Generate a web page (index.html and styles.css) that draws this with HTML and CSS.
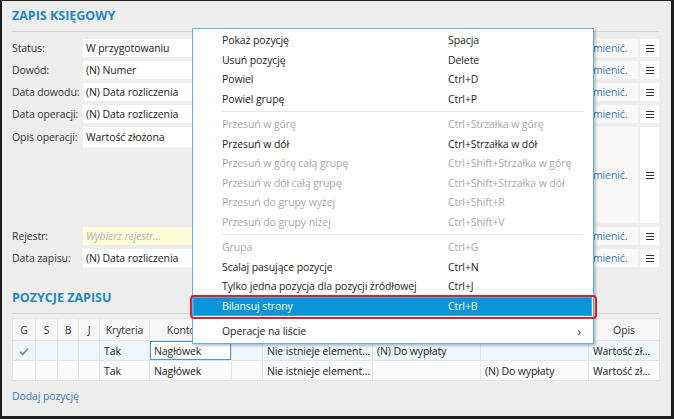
FILE: index.html
```html
<!DOCTYPE html>
<html lang="pl">
<head>
<meta charset="utf-8">
<title>Zapis księgowy</title>
<link rel="stylesheet" href="styles.css">
</head>
<body>
<div class="frame">
  <section class="section">
    <h2 class="section-title">ZAPIS KSIĘGOWY</h2>
    <div class="form">
      <div class="form-row">
        <span class="label">Status:</span>
        <div class="field">W przygotowaniu</div>
        <a class="change">Zmienić.</a>
        <span class="menu-btn"><svg width="8" height="7" viewBox="0 0 8 7"><path d="M0 0.5H8M0 3.5H8M0 6.5H8" stroke="#333" stroke-width="1"/></svg></span>
      </div>
      <div class="form-row">
        <span class="label">Dowód:</span>
        <div class="field">(N) Numer</div>
        <a class="change">Zmienić.</a>
        <span class="menu-btn"><svg width="8" height="7" viewBox="0 0 8 7"><path d="M0 0.5H8M0 3.5H8M0 6.5H8" stroke="#333" stroke-width="1"/></svg></span>
      </div>
      <div class="form-row">
        <span class="label">Data dowodu:</span>
        <div class="field">(N) Data rozliczenia</div>
        <a class="change">Zmienić.</a>
        <span class="menu-btn"><svg width="8" height="7" viewBox="0 0 8 7"><path d="M0 0.5H8M0 3.5H8M0 6.5H8" stroke="#333" stroke-width="1"/></svg></span>
      </div>
      <div class="form-row">
        <span class="label">Data operacji:</span>
        <div class="field">(N) Data rozliczenia</div>
        <a class="change">Zmienić.</a>
        <span class="menu-btn"><svg width="8" height="7" viewBox="0 0 8 7"><path d="M0 0.5H8M0 3.5H8M0 6.5H8" stroke="#333" stroke-width="1"/></svg></span>
      </div>
      <div class="form-row tall">
        <span class="label">Opis operacji:</span>
        <div class="field">Wartość złożona</div>
        <a class="change">Zmienić.</a>
        <span class="menu-btn"><svg width="8" height="7" viewBox="0 0 8 7"><path d="M0 0.5H8M0 3.5H8M0 6.5H8" stroke="#333" stroke-width="1"/></svg></span>
      </div>
      <div class="form-row">
        <span class="label">Rejestr:</span>
        <div class="field placeholder">Wybierz rejestr...</div>
        <a class="change">Zmienić.</a>
        <span class="menu-btn"><svg width="8" height="7" viewBox="0 0 8 7"><path d="M0 0.5H8M0 3.5H8M0 6.5H8" stroke="#333" stroke-width="1"/></svg></span>
      </div>
      <div class="form-row">
        <span class="label">Data zapisu:</span>
        <div class="field">(N) Data rozliczenia</div>
        <a class="change">Zmienić.</a>
        <span class="menu-btn"><svg width="8" height="7" viewBox="0 0 8 7"><path d="M0 0.5H8M0 3.5H8M0 6.5H8" stroke="#333" stroke-width="1"/></svg></span>
      </div>
    </div>
  </section>

  <section class="section section-items">
    <h2 class="section-title">POZYCJE ZAPISU</h2>
    <table class="grid">
      <colgroup>
        <col class="c23"><col class="c22"><col class="c21"><col class="c21"><col class="c50"><col class="c82"><col class="c31"><col class="c110"><col class="c108"><col class="c108"><col class="c71">
      </colgroup>
      <thead>
        <tr><th>G</th><th>S</th><th>B</th><th>J</th><th>Kryteria</th><th>Konto Wn</th><th></th><th></th><th></th><th></th><th>Opis</th></tr>
      </thead>
      <tbody>
        <tr class="selected">
          <td class="check"><svg width="10" height="9" viewBox="0 0 10 9"><path d="M1 4.8L3.8 7.5L9 1.5" fill="none" stroke="#8c8c8c" stroke-width="1.8"/></svg></td>
          <td></td><td></td><td></td>
          <td>Tak</td>
          <td class="focused">Nagłówek</td>
          <td></td>
          <td>Nie istnieje element...</td>
          <td>(N) Do wypłaty</td>
          <td></td>
          <td>Wartość zł...</td>
        </tr>
        <tr>
          <td></td><td></td><td></td><td></td>
          <td>Tak</td>
          <td>Nagłówek</td>
          <td></td>
          <td>Nie istnieje element...</td>
          <td></td>
          <td>(N) Do wypłaty</td>
          <td>Wartość zł...</td>
        </tr>
      </tbody>
    </table>
    <a class="add-link">Dodaj pozycję</a>
  </section>

  <div class="context-menu">
    <div class="item"><span>Pokaż pozycję</span><span>Spacja</span><span></span></div>
    <div class="item"><span>Usuń pozycję</span><span>Delete</span><span></span></div>
    <div class="item"><span>Powiel</span><span>Ctrl+D</span><span></span></div>
    <div class="item"><span>Powiel grupę</span><span>Ctrl+P</span><span></span></div>
    <div class="sep"></div>
    <div class="item disabled"><span>Przesuń w górę</span><span>Ctrl+Strzałka w górę</span><span></span></div>
    <div class="item"><span>Przesuń w dół</span><span>Ctrl+Strzałka w dół</span><span></span></div>
    <div class="item disabled"><span>Przesuń w górę całą grupę</span><span>Ctrl+Shift+Strzałka w górę</span><span></span></div>
    <div class="item disabled"><span>Przesuń w dół całą grupę</span><span>Ctrl+Shift+Strzałka w dół</span><span></span></div>
    <div class="item disabled"><span>Przesuń do grupy wyżej</span><span>Ctrl+Shift+R</span><span></span></div>
    <div class="item disabled"><span>Przesuń do grupy niżej</span><span>Ctrl+Shift+V</span><span></span></div>
    <div class="sep"></div>
    <div class="item disabled"><span>Grupa</span><span>Ctrl+G</span><span></span></div>
    <div class="item"><span>Scalaj pasujące pozycje</span><span>Ctrl+N</span><span></span></div>
    <div class="item"><span>Tylko jedna pozycja dla pozycji źródłowej</span><span>Ctrl+J</span><span></span></div>
    <div class="item active"><span>Bilansuj strony</span><span>Ctrl+B</span><span></span></div>
    <div class="sep sep-faint"></div>
    <div class="item"><span>Operacje na liście</span><span></span><span class="arrow">›</span></div>
  </div>
</div>
</body>
</html>
```

FILE: styles.css
```css
html, body {
  margin: 0;
  padding: 0;
}

body {
  font-family: "Open Sans", "Noto Sans", "DejaVu Sans", sans-serif;
  font-size: 10.5px;
  letter-spacing: -0.1px;
  color: #222;
}

.frame {
  position: relative;
  width: 674px;
  height: 419px;
  box-sizing: border-box;
  border-style: solid;
  border-color: #1e1e1e;
  border-width: 1px 3px 3px 2px;
  padding: 0 12px 0 10px;
  background: #eeeeee;
  overflow: hidden;
}

.section-title {
  margin: 0;
  height: 30px;
  line-height: 30px;
  font-size: 12.5px;
  font-weight: 700;
  letter-spacing: 0;
  color: #1f87c5;
  border-bottom: 1px solid #d6d6d6;
}

.form {
  margin-top: 7px;
  display: flex;
  flex-direction: column;
  gap: 4px;
}

.form-row {
  display: grid;
  grid-template-columns: 71px 1fr 55px 21px;
  height: 18px;
}

.form-row.tall {
  height: 96px;
}

.label {
  line-height: 18px;
  color: #333;
  white-space: nowrap;
}

.field {
  background: #fff;
  line-height: 18px;
  padding-left: 3px;
  white-space: nowrap;
  overflow: hidden;
  color: #222;
}

.tall .label {
  line-height: 20px;
  align-self: start;
}

.tall .field {
  height: 20px;
  line-height: 20px;
  align-self: start;
}

.field.placeholder {
  background: #fcfcd9;
  color: #b7b7b7;
  font-style: italic;
}

.change {
  display: flex;
  align-items: center;
  padding-left: 4px;
  background: #f8f8f8;
  color: #3a7cc0;
  white-space: nowrap;
  cursor: pointer;
}

.menu-btn {
  display: flex;
  align-items: center;
  justify-content: center;
  margin-left: 2px;
  background: #fff;
}

.section-items {
  margin-top: 16px;
}

.grid {
  margin-top: 4px;
  width: 647px;
  table-layout: fixed;
  border-collapse: collapse;
}

.c23 { width: 23px; }
.c22 { width: 22px; }
.c21 { width: 21px; }
.c50 { width: 50px; }
.c82 { width: 82px; }
.c31 { width: 31px; }
.c110 { width: 110px; }
.c108 { width: 108px; }
.c71 { width: 71px; }

.grid th,
.grid td {
  border: 1px solid #e4e4e4;
  padding: 0 4px;
  white-space: nowrap;
  overflow: hidden;
  text-align: left;
}

.grid th {
  height: 21px;
  background: #f6f6f6;
  font-weight: 400;
  text-align: center;
  color: #333;
}

.grid td {
  height: 19px;
  background: #fbfbfb;
  color: #222;
}

.grid tr.selected td {
  background: #eef5fb;
}

.grid tr.selected td.focused {
  background: #fff;
  box-shadow: inset 0 0 0 1px #3f9bd9;
}

.grid td.check {
  text-align: center;
  padding: 0;
}

.grid td.check svg {
  display: inline-block;
  vertical-align: middle;
}

.add-link {
  display: block;
  margin-top: 6px;
  line-height: 18px;
  color: #3a7cc0;
  cursor: pointer;
}

.context-menu {
  position: absolute;
  left: 190px;
  top: 27px;
  width: 402px;
  box-sizing: border-box;
  padding: 2px 0 1px;
  background: #fff;
  border: 1px solid #5db3e5;
  box-shadow: 2px 2px 2px rgba(0, 0, 0, 0.22);
}

.item {
  display: grid;
  grid-template-columns: 226px 1fr auto;
  padding-left: 29px;
  height: 19.5px;
  line-height: 19.5px;
  color: #1e1e1e;
  white-space: nowrap;
}

.item.disabled {
  color: #a9a9a9;
}

.item.active {
  position: relative;
  margin-right: 1px;
  background: #0a95d8;
  color: #fff;
  box-shadow: inset 0 0 0 1px #3eaae3;
}

.item.active::after {
  content: "";
  position: absolute;
  left: -3px;
  right: -5px;
  top: -2px;
  bottom: -3px;
  border: 2px solid #e2202a;
  border-radius: 4px;
}

.arrow {
  padding-right: 12px;
  font-size: 13px;
  color: #333;
}

.sep {
  height: 1px;
  margin: 2px 10px 3px 29px;
  background: #e3e3e3;
}

.sep.sep-faint {
  background: transparent;
}
```
